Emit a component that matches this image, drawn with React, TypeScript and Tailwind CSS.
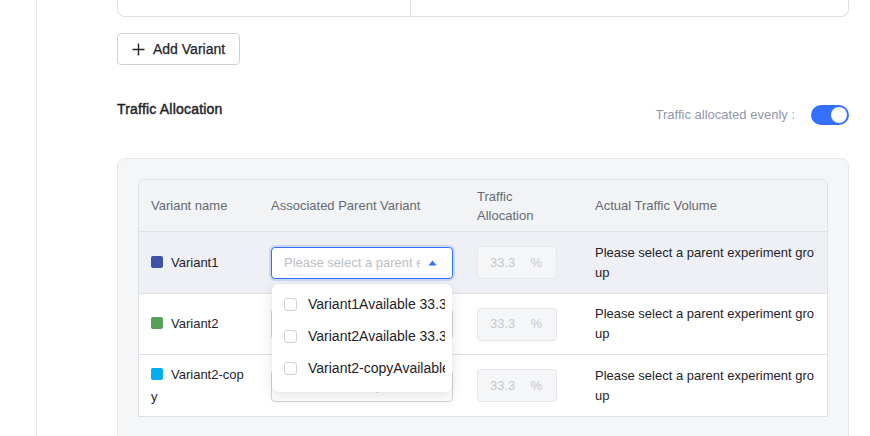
import React from "react";

const font = "font-['Liberation_Sans','Helvetica_Neue',Arial,sans-serif]";

function Caret() {
  return (
    <svg width="9" height="6" viewBox="0 0 9 6" className="shrink-0">
      <path d="M4.5 0.5 L8.5 5.5 L0.5 5.5 Z" fill="#3370ff" />
    </svg>
  );
}

function Select({ active }: { active?: boolean }) {
  return (
    <div
      className={
        active
          ? "h-[32px] w-[182px] rounded-[4px] border border-[#3370ff] bg-white shadow-[0_0_0_2px_rgba(51,112,255,0.18)] flex items-center pl-[12px] pr-[15px]"
          : "h-[32px] w-[182px] rounded-[4px] border border-[#d0d3d6] bg-white flex items-center pl-[12px] pr-[15px]"
      }
    >
      <span className="flex-1 overflow-hidden whitespace-nowrap text-[13px] text-[#bbbfc4] leading-[20px]">
        Please select a parent experiment group
      </span>
      <span className="ml-[8px] flex items-center">
        <Caret />
      </span>
    </div>
  );
}

function TrafficInput() {
  return (
    <div className="h-[33px] w-[80px] rounded-[4px] border border-[#e4e6e9] bg-[#f5f6f7] flex items-center justify-between pl-[12px] pr-[14px] text-[13px] text-[#c5c8ce]">
      <span>33.3</span>
      <span>%</span>
    </div>
  );
}

function Row({
  name,
  color,
  bg,
  h,
  active,
  last,
}: {
  name: string;
  color: string;
  bg: string;
  h: string;
  active?: boolean;
  last?: boolean;
}) {
  return (
    <div className={`flex ${h} ${bg} ${last ? "" : "border-b border-[#dee0e3]"}`}>
      <div className="w-[120px] shrink-0 px-[12px] flex items-center">
        <div className="text-[13px] leading-[22px] text-[#1f2329] break-all">
          <span
            className="inline-block w-[12px] h-[12px] rounded-[2px] mr-[8px] align-[-1px]"
            style={{ backgroundColor: color }}
          />
          {name}
        </div>
      </div>
      <div className="w-[206px] shrink-0 px-[12px] flex items-center">
        <div className="relative">
          <Select active={active} />
          {active && (
            <div className="absolute left-[1px] top-[37px] z-10 w-[180px] rounded-[6px] bg-white shadow-[0_4px_14px_rgba(31,35,41,0.12),0_0_1px_rgba(31,35,41,0.15)] pt-[5px] pb-[7px]">
              {["Variant1Available 33.3%", "Variant2Available 33.3%", "Variant2-copyAvailable 33.3%"].map(
                (t) => (
                  <div key={t} className="h-[32px] flex items-center pl-[12px] pr-[7px]">
                    <span className="w-[13px] h-[13px] shrink-0 rounded-[3px] border border-[#d0d3d6] bg-white" />
                    <span className="ml-[11px] overflow-hidden whitespace-nowrap text-[14px] text-[#1f2329]">
                      {t}
                    </span>
                  </div>
                )
              )}
            </div>
          )}
        </div>
      </div>
      <div className="w-[118px] shrink-0 px-[12px] flex items-center">
        <TrafficInput />
      </div>
      <div className="flex-1 px-[12px] flex items-center">
        <div className="text-[13px] leading-[20px] text-[#1f2329] break-all">
          Please select a parent experiment group
        </div>
      </div>
    </div>
  );
}

export default function App() {
  return (
    <div className={`w-[870px] h-[436px] overflow-hidden bg-white flex ${font}`}>
      <div className="w-[37px] shrink-0 border-r border-[#e5e6eb]" />
      <div className="flex-1 pl-[80px] pr-[21px]">
        <div className="h-[17px] border-x border-b border-[#dee0e3] rounded-b-[8px] flex">
          <div className="w-[293px] border-r border-[#dee0e3]" />
        </div>

        <button className="mt-[16px] h-[32px] w-[123px] rounded-[4px] border border-[#d0d3d6] bg-white flex items-center pl-[14px] gap-[8px] text-[14px] text-[#1f2329]">
          <svg width="13" height="13" viewBox="0 0 13 13">
            <path d="M6.5 0.5 V12.5 M0.5 6.5 H12.5" stroke="#1f2329" strokeWidth="1.4" />
          </svg>
          <span className="[-webkit-text-stroke:0.25px_#1f2329]">Add Variant</span>
        </button>

        <div className="mt-[33px] flex justify-between items-start">
          <div className="text-[14px] leading-[22px] text-[#1f2329] tracking-[0.2px] [-webkit-text-stroke:0.45px_#1f2329]">
            Traffic Allocation
          </div>
          <div className="mt-[7px] h-[20px] flex items-center">
            <span className="text-[13px] text-[#9297ab]">Traffic allocated evenly :</span>
            <div className="ml-[16px] w-[38px] h-[20px] rounded-full bg-[#3370ff] flex items-center justify-end pr-[2px]">
              <div className="w-[16px] h-[16px] rounded-full bg-white" />
            </div>
          </div>
        </div>

        <div className="mt-[33px] rounded-[8px] border border-[#e5e6eb] bg-[#f5f6f8] p-[20px] pb-[40px]">
          <div className="rounded-t-[6px] border border-[#dee0e3] overflow-visible">
            <div className="flex h-[52px] bg-[#f2f3f5] border-b border-[#dee0e3] rounded-t-[6px] text-[13px] leading-[19px] text-[#646a73]">
              <div className="w-[120px] shrink-0 px-[12px] flex items-center">Variant name</div>
              <div className="w-[206px] shrink-0 px-[12px] flex items-center">Associated Parent Variant</div>
              <div className="w-[118px] shrink-0 px-[12px] flex items-center">Traffic Allocation</div>
              <div className="flex-1 px-[12px] flex items-center">Actual Traffic Volume</div>
            </div>
            <Row name="Variant1" color="#3f51a8" bg="bg-[#eef0f5]" h="h-[62px]" active />
            <Row name="Variant2" color="#57a05c" bg="bg-white" h="h-[61px]" />
            <Row name="Variant2-copy" color="#00aeef" bg="bg-white" h="h-[61px]" last />
          </div>
        </div>
      </div>
    </div>
  );
}
